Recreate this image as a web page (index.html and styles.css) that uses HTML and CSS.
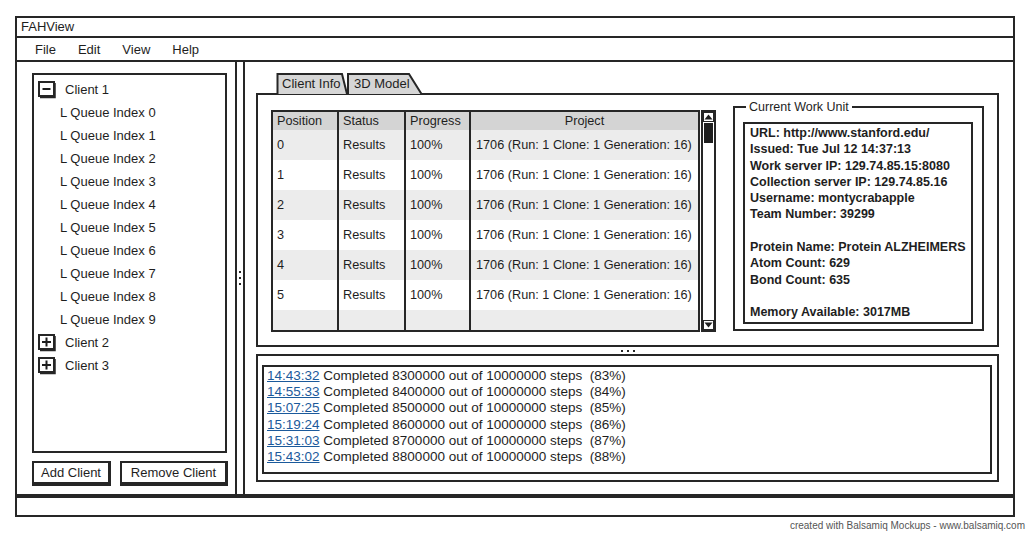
FILE: index.html
```html
<!DOCTYPE html>
<html>
<head>
<meta charset="utf-8">
<title>FAHView</title>
<link rel="stylesheet" href="styles.css">
</head>
<body>
<div class="app">
  <div class="titlebar">FAHView</div>
  <div class="menubar">
    <span>File</span><span>Edit</span><span>View</span><span>Help</span>
  </div>
  <div class="main">
    <div class="left">
      <div class="tree">
        <div class="node"><svg class="tog" width="19" height="18" viewBox="0 0 19 18"><rect x="1" y="1" width="15" height="14" fill="#fff" stroke="#262626" stroke-width="2"/><path d="M17 2 V16.5 H2" fill="none" stroke="#262626" stroke-width="1.5"/><path d="M4.5 8 H12.5" stroke="#1e1e1e" stroke-width="2"/></svg><span>Client 1</span></div>
        <div class="leaf">L Queue Index 0</div>
        <div class="leaf">L Queue Index 1</div>
        <div class="leaf">L Queue Index 2</div>
        <div class="leaf">L Queue Index 3</div>
        <div class="leaf">L Queue Index 4</div>
        <div class="leaf">L Queue Index 5</div>
        <div class="leaf">L Queue Index 6</div>
        <div class="leaf">L Queue Index 7</div>
        <div class="leaf">L Queue Index 8</div>
        <div class="leaf">L Queue Index 9</div>
        <div class="node"><svg class="tog" width="19" height="18" viewBox="0 0 19 18"><rect x="1" y="1" width="15" height="14" fill="#fff" stroke="#262626" stroke-width="2"/><path d="M17 2 V16.5 H2" fill="none" stroke="#262626" stroke-width="1.5"/><path d="M4 8 H13 M8.5 3.5 V12.5" stroke="#1e1e1e" stroke-width="2"/></svg><span>Client 2</span></div>
        <div class="node"><svg class="tog" width="19" height="18" viewBox="0 0 19 18"><rect x="1" y="1" width="15" height="14" fill="#fff" stroke="#262626" stroke-width="2"/><path d="M17 2 V16.5 H2" fill="none" stroke="#262626" stroke-width="1.5"/><path d="M4 8 H13 M8.5 3.5 V12.5" stroke="#1e1e1e" stroke-width="2"/></svg><span>Client 3</span></div>
      </div>
      <div class="buttons">
        <div class="btn btn-add">Add Client</div>
        <div class="btn btn-remove">Remove Client</div>
      </div>
    </div>
    <div class="vsplit"><i></i><i></i><i></i></div>
    <div class="right">
      <div class="tabs">
        <div class="tab tab1">
          <svg width="72" height="21" viewBox="0 0 72 21"><path d="M1.5 21 L1.5 1 L66 1 L71 21" fill="#d6d6d6" stroke="#262626" stroke-width="2"/></svg>
          <span>Client Info</span>
        </div>
        <div class="tab tab2">
          <svg width="76" height="21" viewBox="0 0 76 21"><path d="M1 21 L1 1 L62 1 L74.5 21" fill="#d6d6d6" stroke="#262626" stroke-width="2"/></svg>
          <span>3D Model</span>
        </div>
      </div>
      <div class="tabpanel">
        <div class="tablewrap">
          <div class="tbl">
            <div class="row head"><div>Position</div><div>Status</div><div>Progress</div><div class="c">Project</div></div>
            <div class="row odd"><div>0</div><div>Results</div><div>100%</div><div>1706 (Run: 1 Clone: 1 Generation: 16)</div></div>
            <div class="row"><div>1</div><div>Results</div><div>100%</div><div>1706 (Run: 1 Clone: 1 Generation: 16)</div></div>
            <div class="row odd"><div>2</div><div>Results</div><div>100%</div><div>1706 (Run: 1 Clone: 1 Generation: 16)</div></div>
            <div class="row"><div>3</div><div>Results</div><div>100%</div><div>1706 (Run: 1 Clone: 1 Generation: 16)</div></div>
            <div class="row odd"><div>4</div><div>Results</div><div>100%</div><div>1706 (Run: 1 Clone: 1 Generation: 16)</div></div>
            <div class="row"><div>5</div><div>Results</div><div>100%</div><div>1706 (Run: 1 Clone: 1 Generation: 16)</div></div>
            <div class="row odd last"><div></div><div></div><div></div><div></div></div>
          </div>
          <div class="scroll">
            <div class="arrow"><svg width="9" height="6" viewBox="0 0 9 6"><path d="M0.5 5.5 L4.5 0.5 L8.5 5.5Z" fill="#1e1e1e"/></svg></div>
            <div class="thumb"></div>
            <div class="track"></div>
            <div class="arrow"><svg width="9" height="6" viewBox="0 0 9 6"><path d="M0.5 0.5 L4.5 5.5 L8.5 0.5Z" fill="#1e1e1e"/></svg></div>
          </div>
        </div>
        <fieldset class="wu">
          <legend>Current Work Unit</legend>
          <div class="wubox">
            <div>URL: http://www.stanford.edu/</div>
            <div>Issued: Tue Jul 12 14:37:13</div>
            <div>Work server IP: 129.74.85.15:8080</div>
            <div>Collection server IP: 129.74.85.16</div>
            <div>Username: montycrabapple</div>
            <div>Team Number: 39299</div>
            <div>&nbsp;</div>
            <div>Protein Name: Protein ALZHEIMERS</div>
            <div>Atom Count: 629</div>
            <div>Bond Count: 635</div>
            <div>&nbsp;</div>
            <div>Memory Available: 3017MB</div>
          </div>
        </fieldset>
      </div>
      <div class="hsplit"><i></i><i></i><i></i></div>
      <div class="logpanel">
        <div class="log">
          <div class="line"><a href="#">14:43:32</a> Completed 8300000 out of 10000000 steps  (83%)</div>
          <div class="line"><a href="#">14:55:33</a> Completed 8400000 out of 10000000 steps  (84%)</div>
          <div class="line"><a href="#">15:07:25</a> Completed 8500000 out of 10000000 steps  (85%)</div>
          <div class="line"><a href="#">15:19:24</a> Completed 8600000 out of 10000000 steps  (86%)</div>
          <div class="line"><a href="#">15:31:03</a> Completed 8700000 out of 10000000 steps  (87%)</div>
          <div class="line"><a href="#">15:43:02</a> Completed 8800000 out of 10000000 steps  (88%)</div>
        </div>
      </div>
    </div>
  </div>
  <div class="statusbar"></div>
</div>
<div class="credit">created with Balsamiq Mockups - www.balsamiq.com</div>
</body>
</html>
```

FILE: styles.css
```css
* { box-sizing: border-box; }

body {
  margin: 0;
  background: #fff;
  font-family: "Liberation Sans", Arial, sans-serif;
  font-size: 13px;
  color: #1e1e1e;
}

.app {
  margin: 16px 0 0 15px;
  width: 1000px;
}

.titlebar {
  height: 22px;
  border: 2px solid #262626;
  padding-left: 4px;
  line-height: 18px;
}

.menubar {
  height: 24px;
  border: 2px solid #262626;
  border-top: 0;
  display: flex;
  gap: 22px;
  padding: 2px 0 0 18px;
  line-height: 20px;
}

.main {
  height: 434px;
  border: 2px solid #262626;
  border-top: 0;
  display: grid;
  grid-template-columns: 218px 10px 1fr;
}

/* left column */
.left {
  padding: 11px 0 0 15px;
}

.tree {
  width: 195px;
  height: 380px;
  border: 2px solid #262626;
  padding: 3px 0 0 4px;
}

.node, .leaf {
  height: 23px;
  display: flex;
  align-items: center;
}

.leaf { padding-left: 22px; }

.tog {
  display: block;
  margin-right: 8px;
  margin-top: 1px;
}

.buttons {
  display: flex;
  gap: 9px;
  margin-top: 8px;
}

.btn {
  height: 25px;
  border: 2px solid #262626;
  border-right-width: 3px;
  border-bottom-width: 4px;
  display: flex;
  align-items: center;
  justify-content: center;
}

.btn-add { width: 79px; }
.btn-remove { width: 108px; }

/* vertical splitter */
.vsplit {
  border-left: 2px solid #262626;
  border-right: 2px solid #262626;
  display: flex;
  flex-direction: column;
  align-items: center;
  justify-content: center;
  gap: 4px;
}

.vsplit i, .hsplit i {
  display: block;
  width: 2px;
  height: 2px;
  background: #262626;
}

/* right column */
.right {
  padding: 11px 14px 0 11px;
}

.tabs {
  display: flex;
  margin-left: 20px;
  height: 21px;
}

.tab {
  display: grid;
}

.tab > svg, .tab > span {
  grid-area: 1 / 1;
}

.tab > span {
  align-self: center;
  line-height: 21px;
}

.tab1 > span { padding-left: 6px; }
.tab2 { margin-left: -1px; }
.tab2 > span { padding-left: 7px; }

.tabpanel {
  height: 254px;
  margin-top: -1px;
  border: 2px solid #262626;
  padding: 15px 13px 0 13px;
  display: flex;
  align-items: flex-start;
}

.tablewrap {
  display: flex;
  gap: 1px;
}

.tbl {
  width: 429px;
  height: 222px;
  border: 2px solid #262626;
  overflow: hidden;
  font-size: 12.7px;
}

.row {
  display: grid;
  grid-template-columns: 66px 67px 65px 227px;
  height: 30px;
  background: #fff;
}

.row.odd { background: #ececec; }

.row.head {
  height: 18px;
  background: #d4d4d4;
}

.row.last { height: 20px; }

.row > div {
  padding-left: 4px;
  display: flex;
  align-items: center;
  white-space: nowrap;
}

.row > div:nth-child(-n+3) {
  border-right: 2px solid #262626;
}

.row > div:nth-child(4) { padding-left: 5px; }

.row.head > div.c {
  justify-content: center;
  padding-left: 0;
}

.scroll {
  width: 15px;
  height: 222px;
  border: 2px solid #262626;
  display: flex;
  flex-direction: column;
}

.scroll .arrow {
  height: 10px;
  border: 1px solid #262626;
  display: flex;
  align-items: center;
  justify-content: center;
}

.scroll .thumb {
  height: 20px;
  margin: 1px 1px 0 1px;
  background: #1e1e1e;
}

.scroll .track { flex: 1; }

/* current work unit */
.wu {
  margin: -10px 0 0 17px;
  width: 251px;
  height: 231px;
  border: 2px solid #262626;
  padding: 0;
  min-width: 0;
}

.wu legend {
  margin-left: 11px;
  padding: 0 3px;
  font-size: 12.5px;
  line-height: 14px;
}

.wubox {
  margin: 8px 9px 0 8px;
  height: 202px;
  border: 2px solid #262626;
  padding: 1px 5px;
  font-weight: bold;
  font-size: 12.5px;
  line-height: 16.3px;
  white-space: nowrap;
}

/* horizontal splitter */
.hsplit {
  height: 7px;
  display: flex;
  justify-content: center;
  align-items: center;
  gap: 4px;
}

.logpanel {
  height: 128px;
  border: 2px solid #262626;
  padding: 9px 5px 0 4px;
}

.log {
  height: 109px;
  border: 2px solid #262626;
  padding: 1px 3px;
  font-size: 13.5px;
  line-height: 16.2px;
}

.log .line { white-space: pre; }

.log a {
  color: #1b5a9b;
  text-decoration: underline;
}

.statusbar {
  height: 21px;
  border: 2px solid #262626;
}

.credit {
  width: 1025px;
  text-align: right;
  margin-top: 3px;
  font-size: 10px;
  line-height: 12px;
  color: #555;
}
```
